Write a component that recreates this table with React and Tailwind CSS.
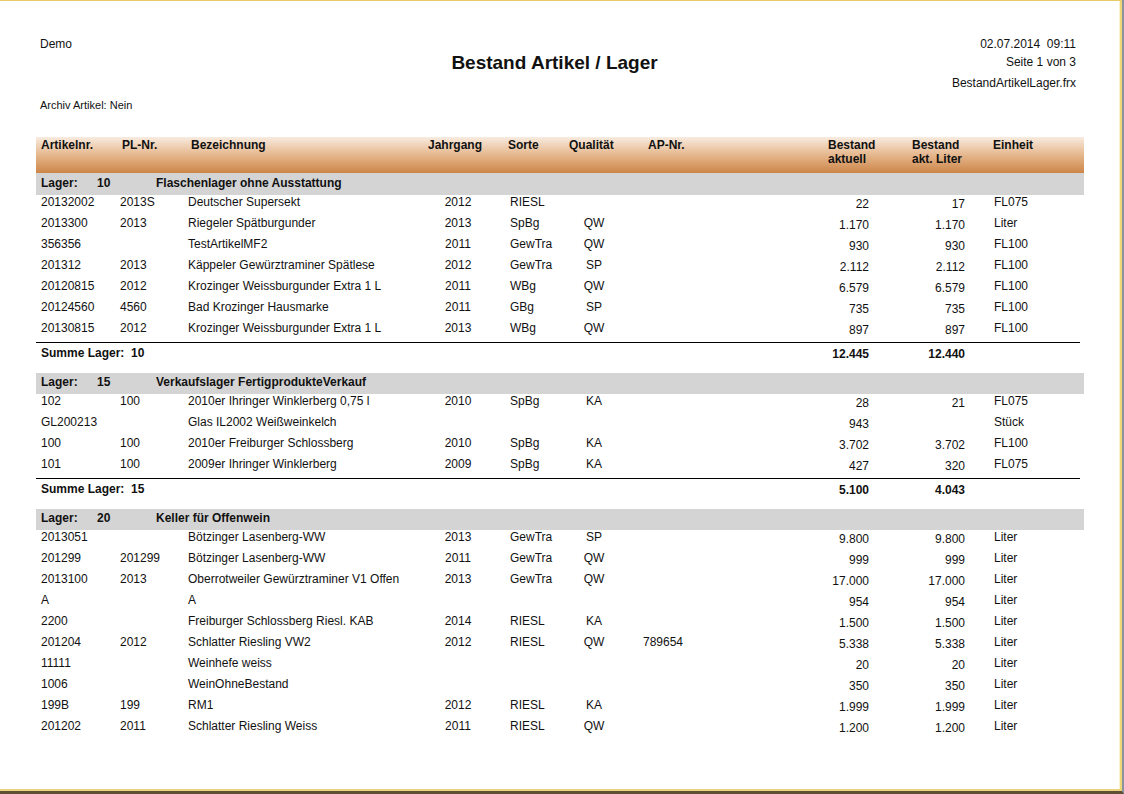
import React from 'react';

const lager = [
  {
    nr: '10',
    name: 'Flaschenlager ohne Ausstattung',
    summe: ['12.445', '12.440'],
    rows: [
      ['20132002', '2013S', 'Deutscher Supersekt', '2012', 'RIESL', '', '', '22', '17', 'FL075'],
      ['2013300', '2013', 'Riegeler Spätburgunder', '2013', 'SpBg', 'QW', '', '1.170', '1.170', 'Liter'],
      ['356356', '', 'TestArtikelMF2', '2011', 'GewTra', 'QW', '', '930', '930', 'FL100'],
      ['201312', '2013', 'Käppeler Gewürztraminer Spätlese', '2012', 'GewTra', 'SP', '', '2.112', '2.112', 'FL100'],
      ['20120815', '2012', 'Krozinger Weissburgunder Extra 1 L', '2011', 'WBg', 'QW', '', '6.579', '6.579', 'FL100'],
      ['20124560', '4560', 'Bad Krozinger Hausmarke', '2011', 'GBg', 'SP', '', '735', '735', 'FL100'],
      ['20130815', '2012', 'Krozinger Weissburgunder Extra 1 L', '2013', 'WBg', 'QW', '', '897', '897', 'FL100'],
    ],
  },
  {
    nr: '15',
    name: 'Verkaufslager FertigprodukteVerkauf',
    summe: ['5.100', '4.043'],
    rows: [
      ['102', '100', '2010er Ihringer Winklerberg 0,75 l', '2010', 'SpBg', 'KA', '', '28', '21', 'FL075'],
      ['GL200213', '', 'Glas IL2002 Weißweinkelch', '', '', '', '', '943', '', 'Stück'],
      ['100', '100', '2010er Freiburger Schlossberg', '2010', 'SpBg', 'KA', '', '3.702', '3.702', 'FL100'],
      ['101', '100', '2009er Ihringer Winklerberg', '2009', 'SpBg', 'KA', '', '427', '320', 'FL075'],
    ],
  },
  {
    nr: '20',
    name: 'Keller für Offenwein',
    rows: [
      ['2013051', '', 'Bötzinger Lasenberg-WW', '2013', 'GewTra', 'SP', '', '9.800', '9.800', 'Liter'],
      ['201299', '201299', 'Bötzinger Lasenberg-WW', '2011', 'GewTra', 'QW', '', '999', '999', 'Liter'],
      ['2013100', '2013', 'Oberrotweiler Gewürztraminer V1 Offen', '2013', 'GewTra', 'QW', '', '17.000', '17.000', 'Liter'],
      ['A', '', 'A', '', '', '', '', '954', '954', 'Liter'],
      ['2200', '', 'Freiburger Schlossberg Riesl. KAB', '2014', 'RIESL', 'KA', '', '1.500', '1.500', 'Liter'],
      ['201204', '2012', 'Schlatter Riesling VW2', '2012', 'RIESL', 'QW', '789654', '5.338', '5.338', 'Liter'],
      ['11111', '', 'Weinhefe weiss', '', '', '', '', '20', '20', 'Liter'],
      ['1006', '', 'WeinOhneBestand', '', '', '', '', '350', '350', 'Liter'],
      ['199B', '199', 'RM1', '2012', 'RIESL', 'KA', '', '1.999', '1.999', 'Liter'],
      ['201202', '2011', 'Schlatter Riesling Weiss', '2011', 'RIESL', 'QW', '', '1.200', '1.200', 'Liter'],
    ],
  },
];

const Row = ({ r }) => (
  <div className="flex h-[21px] pl-[5px] leading-[14px]">
    <div className="w-[79px]">{r[0]}</div>
    <div className="w-[68px]">{r[1]}</div>
    <div className="w-[240px] whitespace-nowrap">{r[2]}</div>
    <div className="w-[60px] text-center">{r[3]}</div>
    <div className="w-[76px] pl-[22px]">{r[4]}</div>
    <div className="w-[60px] text-center">{r[5]}</div>
    <div className="w-[165px] pl-[19px]">{r[6]}</div>
    <div className="w-[80px] pt-[2px] text-right">{r[7]}</div>
    <div className="w-[96px] pt-[2px] text-right">{r[8]}</div>
    <div className="pl-[29px]">{r[9]}</div>
  </div>
);

const Gruppe = ({ g, first }) => (
  <div>
    <div
      className={
        (first ? 'h-[22px] pt-[3px] ' : 'h-[21px] pt-[2px] ') +
        'flex bg-[#d4d4d4] pl-[5px] font-bold leading-[14px]'
      }
    >
      <div className="w-[56px]">Lager:</div>
      <div className="w-[59px]">{g.nr}</div>
      <div>{g.name}</div>
    </div>
    {g.rows.map((r, i) => (
      <Row key={i} r={r} />
    ))}
    {g.summe && (
      <div className="flex h-[31px] w-[1044px] border-t border-black pl-[5px] pt-[3px] font-bold leading-[14px]">
        <div className="w-[748px] whitespace-pre">{'Summe Lager:  ' + g.nr}</div>
        <div className="w-[80px] pt-[1px] text-right">{g.summe[0]}</div>
        <div className="w-[96px] pt-[1px] text-right">{g.summe[1]}</div>
      </div>
    )}
  </div>
);

export default function App() {
  return (
    <div className="h-[794px] w-[1124px] overflow-hidden border-b-[3px] border-r-2 border-b-[#5e5035] border-r-[#8a93a0] bg-white">
      <div className="h-full border-b-2 border-r-2 border-t border-b-[#ead27e] border-r-[#efd676] border-t-[#e6cb68]">
        <div
          className="h-full border-r border-[#fbf1cc] text-[12px] text-[#111]"
          style={{ fontFamily: '"Liberation Sans", Arial, sans-serif' }}
        >
          <div className="grid h-[136px] grid-cols-[200px_1fr_209px] pl-[40px] pr-[43px]">
            <div>
              <div className="pt-[36px] leading-[14px]">Demo</div>
              <div className="pt-[48px] text-[11px] leading-[13px]">Archiv Artikel: Nein</div>
            </div>
            <div className="pt-[51px] pl-[2px] text-center text-[19px] font-bold leading-[22px]">
              Bestand Artikel / Lager
            </div>
            <div className="pt-[36px] text-right leading-[14px]">
              <div className="whitespace-pre">02.07.2014  09:11</div>
              <div className="mt-[4px]">Seite 1 von 3</div>
              <div className="mt-[7px]">BestandArtikelLager.frx</div>
            </div>
          </div>

          <div className="ml-[36px] w-[1048px]">
            <div className="flex h-[36px] bg-gradient-to-b from-[#f8ebdf] via-[#e5b78d] to-[#cc8546] pl-[5px] pt-[1px] font-bold leading-[14px]">
              <div className="w-[81px]">Artikelnr.</div>
              <div className="w-[69px]">PL-Nr.</div>
              <div className="w-[237px]">Bezeichnung</div>
              <div className="w-[80px]">Jahrgang</div>
              <div className="w-[61px]">Sorte</div>
              <div className="w-[79px]">Qualität</div>
              <div className="w-[180px]">AP-Nr.</div>
              <div className="w-[84px]">
                Bestand
                <br />
                aktuell
              </div>
              <div className="w-[81px]">
                Bestand
                <br />
                akt. Liter
              </div>
              <div>Einheit</div>
            </div>
            {lager.map((g, i) => (
              <Gruppe key={g.nr} g={g} first={i === 0} />
            ))}
          </div>
        </div>
      </div>
    </div>
  );
}
